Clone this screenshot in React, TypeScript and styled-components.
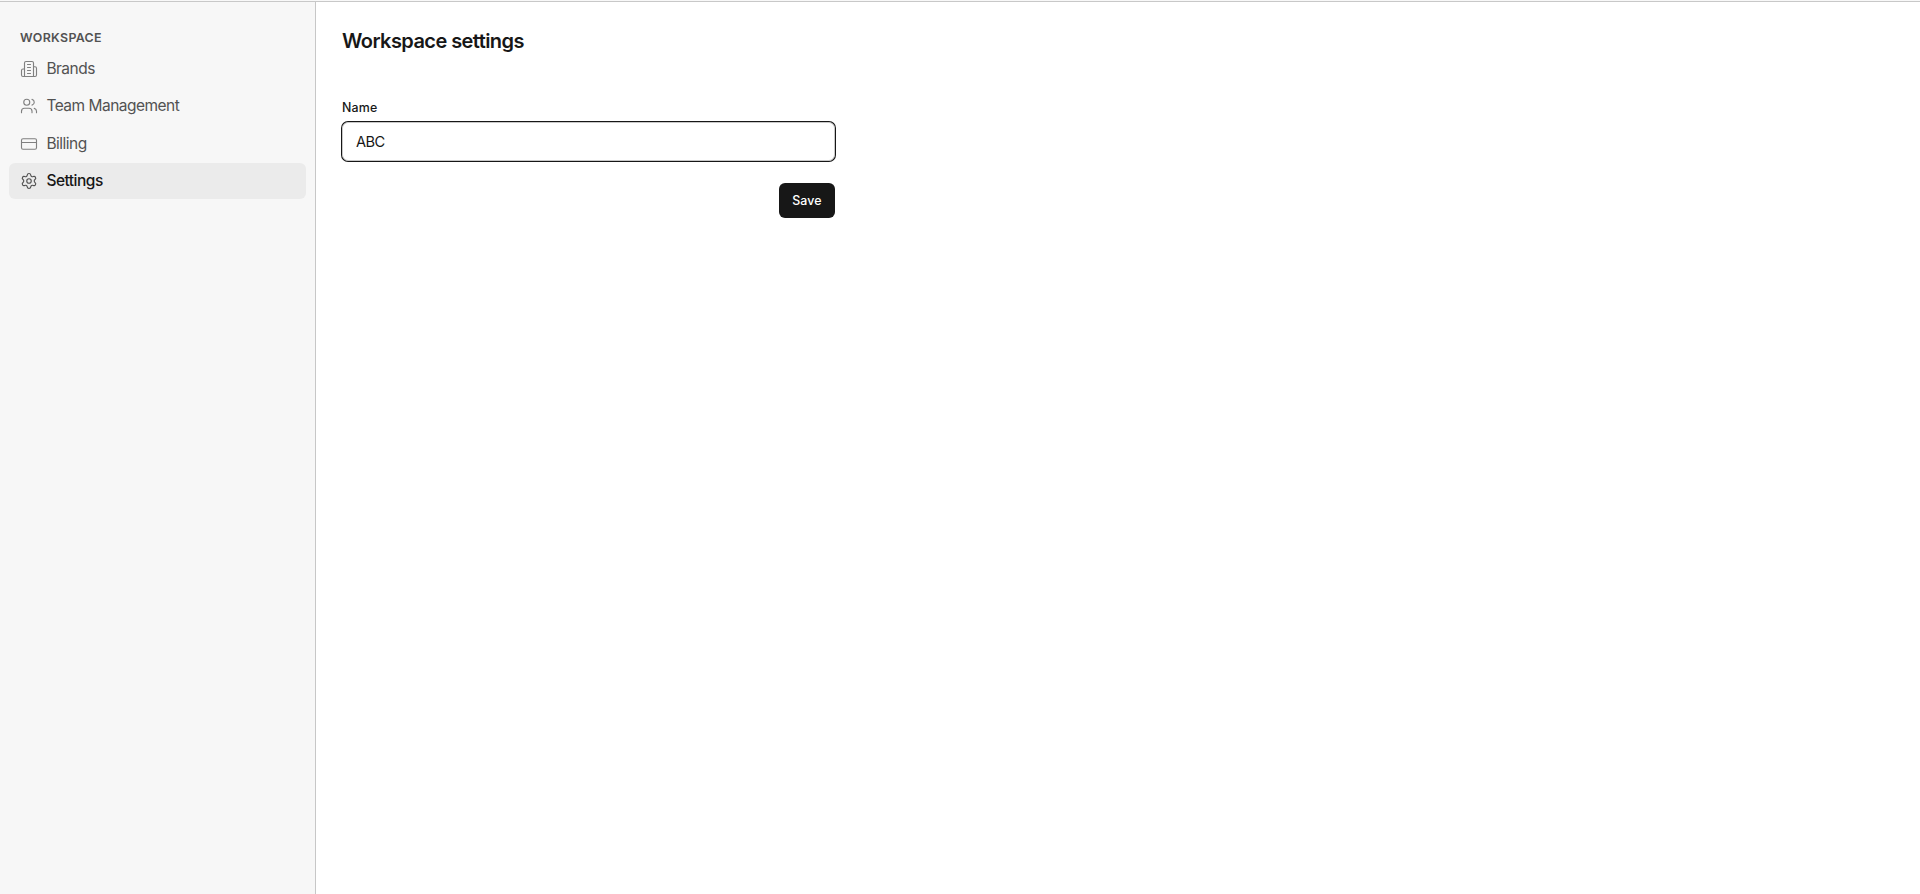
import { CreditCard, Settings, Users } from 'lucide-react';
import { useState } from 'react';
import type { ReactNode } from 'react';
import styled, { createGlobalStyle, css } from 'styled-components';

const GlobalStyle = createGlobalStyle`
    * {
        box-sizing: border-box;
    }
    body {
        margin: 0;
        background: #fff;
        color: #171717;
        font-family: Inter, 'Liberation Sans', sans-serif;
    }
`;

const Page = styled.div`
    display: flex;
    flex-direction: column;
    height: 100vh;
    overflow: hidden;
`;

const TopBar = styled.header`
    flex: none;
    height: 2px;
    background: #f8f8f8;
    border-bottom: 1px solid #c8c8c8;
`;

const Body = styled.div`
    display: flex;
    flex: 1;
    min-height: 0;
`;

const Sidebar = styled.aside`
    flex: none;
    width: 316px;
    padding: 26px 9px 0;
    background: #f7f7f7;
    border-right: 1px solid #c7c7c7;
`;

const SidebarTitle = styled.div`
    padding-left: 11px;
    margin-bottom: 3.5px;
    line-height: 19px;
    font-size: 12.4px;
    font-weight: 600;
    letter-spacing: 0.34px;
    color: #525252;
`;

const Nav = styled.nav`
    display: flex;
    flex-direction: column;
    gap: 1.5px;
`;

const NavItem = styled.a<{ $active?: boolean }>`
    display: flex;
    align-items: center;
    gap: 8.4px;
    height: 36px;
    padding: 0 11px;
    border-radius: 6px;
    font-size: 15.5px;
    letter-spacing: -0.51px;
    line-height: 20px;
    color: #525252;
    text-decoration: none;

    svg {
        flex: none;
        color: #808080;
    }

    ${props =>
        props.$active &&
        css`
            background: #ebebeb;
            color: #171717;
            font-weight: 500;
            svg {
                color: #525252;
            }
        `}
`;

const Content = styled.main`
    flex: 1;
    padding: 24px 26px;
`;

const Title = styled.h1`
    margin: 0;
    line-height: 30px;
    font-size: 20px;
    font-weight: 600;
    letter-spacing: -0.57px;
`;

const Form = styled.form`
    display: flex;
    flex-direction: column;
    width: 493px;
    margin-top: 42px;
`;

const Label = styled.label`
    margin-bottom: 4px;
    line-height: 20px;
    font-size: 12.4px;
    font-weight: 500;
    letter-spacing: 0.2px;
`;

const Input = styled.input`
    height: 39px;
    padding: 0 13px;
    border: 1px solid #c8c8c8;
    border-radius: 6px;
    outline: none;
    box-shadow: 0 0 0 1px #171717;
    font: inherit;
    font-size: 14.6px;
    letter-spacing: -0.6px;
    color: #171717;
`;

const SaveButton = styled.button`
    align-self: flex-end;
    width: 56px;
    height: 35px;
    margin-top: 22px;
    padding: 0 0 1px;
    border: none;
    border-radius: 6px;
    background: #171717;
    color: #fff;
    font: inherit;
    font-size: 12.4px;
    font-weight: 500;
    letter-spacing: 0.15px;
`;

const BuildingIcon = () => (
    <svg
        width='18'
        height='18'
        viewBox='0 0 24 24'
        fill='none'
        stroke='currentColor'
        strokeWidth='1.5'
        strokeLinecap='round'
        strokeLinejoin='round'
    >
        <path d='M6 22V4a2 2 0 0 1 2-2h8a2 2 0 0 1 2 2v18Z' />
        <path d='M6 12H4a2 2 0 0 0-2 2v6a2 2 0 0 0 2 2h2' />
        <path d='M18 9h2a2 2 0 0 1 2 2v9a2 2 0 0 1-2 2h-2' />
        <path d='M10 6h4M10 10h4M10 14h4M10 18h4' />
    </svg>
);

interface NavEntry {
    label: string;
    icon: ReactNode;
}

const navEntries: NavEntry[] = [
    { label: 'Brands', icon: <BuildingIcon /> },
    { label: 'Team Management', icon: <Users size={18} strokeWidth={1.5} /> },
    { label: 'Billing', icon: <CreditCard size={18} strokeWidth={1.5} /> },
    { label: 'Settings', icon: <Settings size={18} strokeWidth={1.5} /> },
];

const App = () => {
    const [name, setName] = useState('ABC');
    return (
        <Page>
            <GlobalStyle />
            <TopBar />
            <Body>
                <Sidebar>
                    <SidebarTitle>WORKSPACE</SidebarTitle>
                    <Nav>
                        {navEntries.map(({ label, icon }) => (
                            <NavItem key={label} href='#' $active={label === 'Settings'}>
                                {icon}
                                <span>{label}</span>
                            </NavItem>
                        ))}
                    </Nav>
                </Sidebar>
                <Content>
                    <Title>Workspace settings</Title>
                    <Form onSubmit={e => e.preventDefault()}>
                        <Label htmlFor='name'>Name</Label>
                        <Input id='name' value={name} onChange={e => setName(e.target.value)} />
                        <SaveButton type='submit'>Save</SaveButton>
                    </Form>
                </Content>
            </Body>
        </Page>
    );
};
export default App;
